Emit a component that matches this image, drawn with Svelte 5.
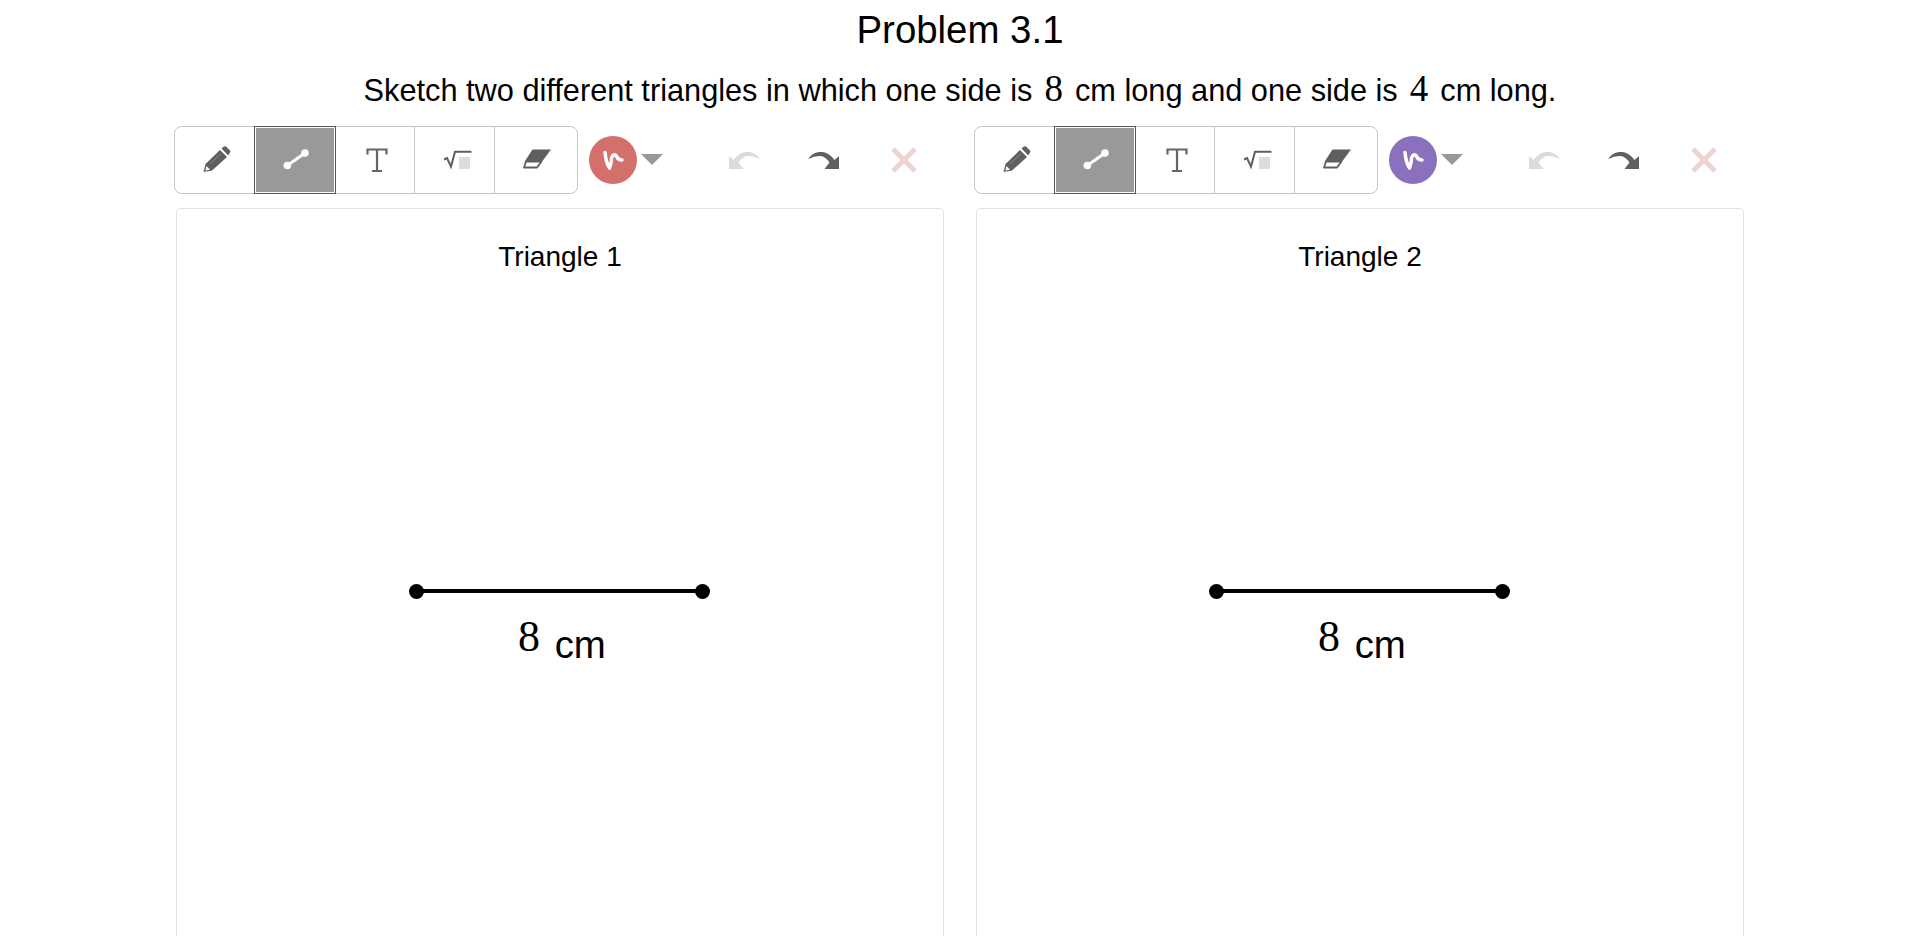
<script>
  const sketches = [
    { title: 'Triangle 1', color: '#d4706c' },
    { title: 'Triangle 2', color: '#8a70bd' }
  ];
  const tools = ['pencil', 'segment', 'text', 'math', 'eraser'];
</script>

<div class="page">
  <h1>Problem 3.1</h1>
  <p class="prompt">
    Sketch two different triangles in which one side is <span class="num">8</span> cm long and one side is <span class="num">4</span> cm long.
  </p>

  <div class="columns">
    {#each sketches as sketch}
      <section class="column">
        <div class="toolbar">
          <div class="tools">
            {#each tools as tool}
              <button type="button" class="tool" class:active={tool === 'segment'} aria-label={tool}>
                {#if tool === 'pencil'}
                  <svg width="30" height="30" viewBox="0 0 30 30">
                    <g transform="translate(-1 0)">
                      <path d="M2.5 27 L4.5 19 L19 5 L26 12 L11 25.5 Z" fill="#5f5f5f" />
                      <path d="M20.5 3.5 L23 1.5 Q24 .8 25 1.5 L29 5.5 Q29.8 6.5 29 7.5 L27.2 10.5 Z" fill="#5f5f5f" />
                      <path d="M5.4 21 L9 24.6 L4.4 25.8 Z" fill="#fff" />
                      <path d="M9 19 L20 8.5" stroke="#8a8a8a" stroke-width="1" />
                    </g>
                  </svg>
                {:else if tool === 'segment'}
                  <svg width="30" height="30" viewBox="0 0 30 30">
                    <path d="M5.3 20.5 L23 8" stroke="#fff" stroke-width="3" />
                    <circle cx="5.3" cy="20.5" r="3.8" fill="#fff" />
                    <circle cx="23" cy="8" r="3.8" fill="#fff" />
                  </svg>
                {:else if tool === 'text'}
                  <svg width="30" height="30" viewBox="0 0 30 30">
                    <path d="M5.5 9.5 V4.5 H24.5 V9.5 M15 4.5 V26 M10 26 H20" fill="none" stroke="#666" stroke-width="2.2" />
                  </svg>
                {:else if tool === 'math'}
                  <svg class="math" width="30" height="30" viewBox="0 0 30 30">
                    <path d="M1 14.5 L4 13 L8 21.5 L12 6.7 H28.5" fill="none" stroke="#5f5f5f" stroke-width="2" />
                    <rect x="16" y="12" width="11" height="12" fill="#dcdcdc" />
                  </svg>
                {:else}
                  <svg width="30" height="30" viewBox="0 0 30 30">
                    <path d="M9.5 4.5 H28 L19.5 16 H2 Z" fill="#5f5f5f" />
                    <path d="M3 16.5 H18.5 L14 22.5 H1 Z" fill="#fff" stroke="#5f5f5f" stroke-width="1.8" stroke-linejoin="round" />
                  </svg>
                {/if}
              </button>
            {/each}
          </div>

          <button type="button" class="color" aria-label="color">
            <span class="swatch" style="background: {sketch.color}">
              <svg width="26" height="26" viewBox="0 0 26 26">
                <path d="M5 5.5 Q6 16 9.5 21 Q11.5 16 11.5 11 Q13 6.5 16 8.5 Q18 13 22 13" fill="none" stroke="#fff" stroke-width="3.5" stroke-linecap="round" stroke-linejoin="round" />
              </svg>
            </span>
            <span class="caret"></span>
          </button>

          <div class="actions">
            <svg width="31" height="17" viewBox="0 0 31 17">
              <path d="M0 4 L4.5 8 Q11 -1 20 0 Q27 1 31 7 Q24 3.5 18 4 Q13 5 9.5 10.5 L14.5 17 H0 Z" fill="#dcdcdc" />
            </svg>
            <svg class="redo" width="31" height="17" viewBox="0 0 31 17">
              <path d="M31 4 L26.5 8 Q20 -1 11 0 Q4 1 0 7 Q7 3.5 13 4 Q18 5 21.5 10.5 L16.5 17 H31 Z" fill="#606060" />
            </svg>
            <svg class="clear" width="26" height="26" viewBox="0 0 26 26">
              <path d="M2 2 L24 24 M24 2 L2 24" stroke="#eed3d2" stroke-width="5" />
            </svg>
          </div>
        </div>

        <div class="panel">
          <div class="label">{sketch.title}</div>
          <div class="segment">
            <span class="dot start"></span>
            <span class="dot end"></span>
          </div>
          <div class="length"><span class="num">8</span> cm</div>
        </div>
      </section>
    {/each}
  </div>
</div>

<style>
  :global(body) {
    margin: 0;
    background: #fff;
    overflow: hidden;
  }
  .page {
    font-family: "Liberation Sans", Arial, sans-serif;
    color: #000;
    height: 936px;
    overflow: hidden;
  }
  h1 {
    margin: 0;
    padding-top: 8px;
    font-size: 38.4px;
    line-height: 44px;
    font-weight: 400;
    text-align: center;
  }
  .prompt {
    margin: 0;
    padding-top: 18px;
    font-size: 30.72px;
    line-height: 40px;
    text-align: center;
  }
  .num {
    font-family: "Liberation Serif", serif;
    font-size: 37px;
    line-height: 1;
    margin: 0 3.5px;
  }
  .columns {
    display: flex;
    padding: 15px 0 0 174px;
  }
  .column {
    width: 800px;
  }
  .toolbar {
    display: flex;
    align-items: center;
    height: 68px;
  }
  .tools {
    display: flex;
    width: 404px;
    height: 68px;
    box-sizing: border-box;
    border: 1px solid #c4c4c4;
    border-radius: 8px;
  }
  .tool {
    flex: 0 0 80px;
    display: flex;
    align-items: center;
    justify-content: center;
    box-sizing: border-box;
    padding: 0 0 1px 4px;
    background: #fff;
    border: none;
    border-right: 1px solid #c4c4c4;
  }
  .tool:first-child {
    flex-basis: 79px;
    border-right: none;
    border-radius: 8px 0 0 8px;
  }
  .tool:nth-child(3) {
    flex-basis: 79px;
  }
  .tool:last-child {
    flex: 1;
    border-right: none;
    border-radius: 0 8px 8px 0;
  }
  .tool.active {
    flex-basis: 82px;
    margin: -1px 0;
    background: #999;
    border: none;
    outline: 1px solid #555;
    outline-offset: -1px;
    box-shadow: inset 0 0 0 2px #fff;
  }
  .math {
    margin-left: 2px;
  }
  .color {
    display: flex;
    align-items: center;
    gap: 4px;
    margin-left: 11px;
    padding: 0;
    background: none;
    border: none;
  }
  .swatch {
    display: flex;
    align-items: center;
    justify-content: center;
    width: 48px;
    height: 48px;
    border-radius: 50%;
  }
  .caret {
    width: 0;
    height: 0;
    margin-top: -2px;
    border-left: 11px solid transparent;
    border-right: 11px solid transparent;
    border-top: 11px solid #999;
  }
  .actions {
    display: flex;
    align-items: center;
    margin-left: 66px;
  }
  .redo {
    margin-left: 48px;
  }
  .clear {
    margin-left: 52px;
  }
  .panel {
    position: relative;
    width: 768px;
    height: 800px;
    margin: 14px 0 0 2px;
    box-sizing: border-box;
    border: 1px solid #e2e2e2;
    border-radius: 4px;
  }
  .label {
    padding-top: 31px;
    font-size: 28px;
    line-height: 34px;
    text-align: center;
  }
  .segment {
    position: absolute;
    left: 239px;
    top: 380px;
    width: 286px;
    height: 4px;
    background: #000;
  }
  .dot {
    position: absolute;
    top: -5.5px;
    width: 15px;
    height: 15px;
    border-radius: 50%;
    background: #000;
  }
  .dot.start {
    left: -7.5px;
  }
  .dot.end {
    right: -7.5px;
  }
  .length {
    position: absolute;
    left: 341px;
    top: 406px;
    font-size: 38.4px;
    line-height: 50px;
    white-space: nowrap;
  }
  .length .num {
    font-size: 44px;
    margin: 0 4px 0 0;
    vertical-align: 7px;
  }
</style>
